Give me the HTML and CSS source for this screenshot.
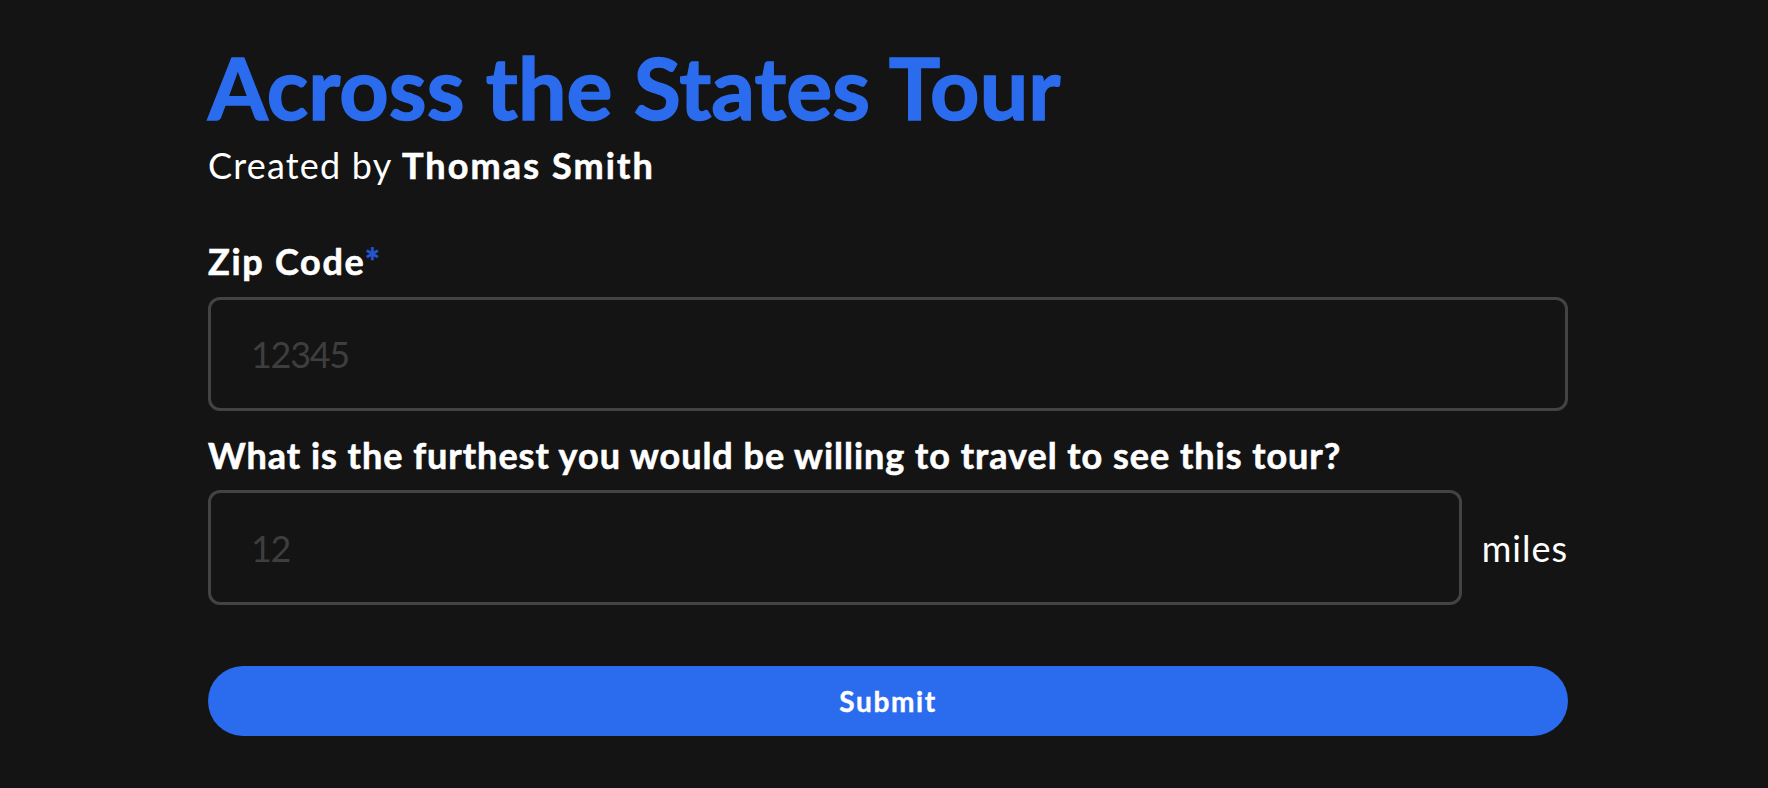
FILE: index.html
```html
<!DOCTYPE html>
<html lang="en">
<head>
<meta charset="utf-8">
<title>Across the States Tour</title>
<link rel="stylesheet" href="styles.css">
</head>
<body>
  <main class="page">
    <header class="header">
      <h1 class="title">Across the States Tour</h1>
      <p class="byline">Created by <strong>Thomas Smith</strong></p>
    </header>
    <form class="form">
      <label class="label label-zip" for="zip">Zip Code<span class="req">*</span></label>
      <input class="field field-zip" id="zip" type="text" placeholder="12345">
      <label class="label label-distance" for="distance">What is the furthest you would be willing to travel to see this tour?</label>
      <div class="distance-row">
        <input class="field field-distance" id="distance" type="text" placeholder="12">
        <span class="unit">miles</span>
      </div>
      <button class="submit" type="button">Submit</button>
    </form>
  </main>
</body>
</html>
```
FILE: styles.css
```css
* { box-sizing: border-box; }

html, body {
  margin: 0;
  background: #141414;
}

body {
  font-family: Lato, "Noto Sans", sans-serif;
  color: #ffffff;
}

.page {
  width: 1360px;
  margin-left: 208px;
  padding-top: 44px;
}

.header {
  display: flex;
  flex-direction: column;
}

.title {
  margin: 0;
  font-size: 86px;
  line-height: 86px;
  font-weight: 700;
  letter-spacing: 0.15px;
  color: #2b6cef;
  -webkit-text-stroke: 1.5px #2b6cef;
}

.byline {
  margin: 17px 0 0;
  font-size: 36px;
  line-height: 36px;
  font-weight: 400;
  letter-spacing: 1.2px;
}

.byline strong {
  font-weight: 700;
  letter-spacing: 2.1px;
  -webkit-text-stroke: 0.6px #ffffff;
}

.form {
  display: flex;
  flex-direction: column;
  margin-top: 60px;
}

.label {
  display: block;
  font-size: 36px;
  line-height: 36px;
  font-weight: 700;
  letter-spacing: 0.98px;
  color: #ffffff;
  -webkit-text-stroke: 0.6px #ffffff;
}

.label-zip {
  letter-spacing: 1.7px;
}

.req {
  color: #2456d0;
  -webkit-text-stroke: 0.6px #2456d0;
}

.field {
  display: block;
  height: 114px;
  border: 3px solid #434343;
  border-radius: 12px;
  background: #141414;
  color: #ffffff;
  font-family: Lato, "Noto Sans", sans-serif;
  font-size: 36px;
  letter-spacing: -1.3px;
  padding: 0 40px;
  outline: none;
}

.field::placeholder {
  color: #3e3e3e;
}

.field-zip {
  width: 100%;
  margin-top: 18px;
}

.label-distance {
  margin-top: 26px;
}

.distance-row {
  display: flex;
  align-items: center;
  gap: 20px;
  margin-top: 17px;
}

.field-distance {
  flex: 1;
  height: 115px;
}

.unit {
  font-size: 36px;
  font-weight: 400;
  letter-spacing: 1px;
  color: #ffffff;
}

.submit {
  margin-top: 61px;
  height: 70px;
  width: 100%;
  border: none;
  border-radius: 35px;
  background: #2b6cef;
  color: #ffffff;
  font-family: Lato, "Noto Sans", sans-serif;
  font-size: 28px;
  font-weight: 700;
  letter-spacing: 1.6px;
  -webkit-text-stroke: 0.4px #ffffff;
  cursor: pointer;
}
```
